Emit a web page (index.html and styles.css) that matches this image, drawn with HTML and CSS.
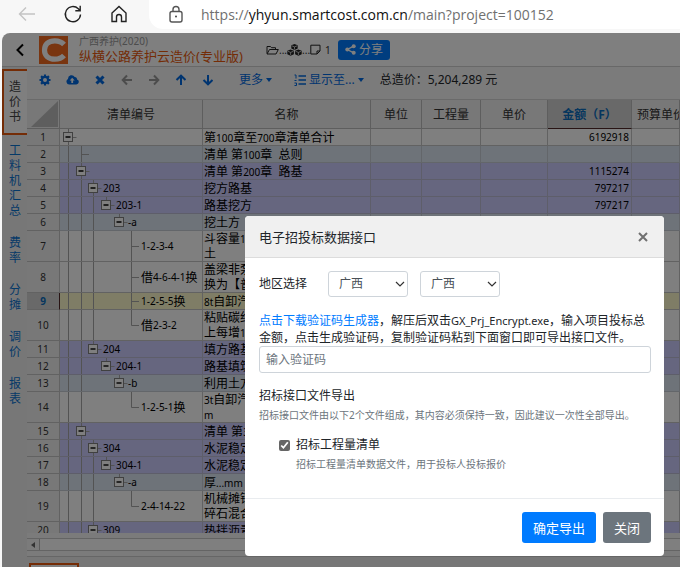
FILE: index.html
```html
<!DOCTYPE html>
<html lang="zh-CN">
<head>
<meta charset="utf-8">
<title>纵横公路养护云造价(专业版)</title>
<link rel="stylesheet" href="styles.css">
</head>
<body>
<svg class="defs" aria-hidden="true">
  <defs>
    <path id="v1" class="guide" d="M8.5 0V31"/>
    <path id="v2" class="guide" d="M21.5 0V31"/>
    <path id="v3" class="guide" d="M33.5 0V31"/>
    <g id="box"><rect class="box" x="-4.5" y="3.5" width="9" height="9"/><path class="minus" d="M-2.5 8H2.5"/><path class="guide" d="M5 8.5H8.500M0.500 0V3"/></g>
    <path id="mid" class="guide" d="M71.500 0V31M72 15.500H79"/>
    <path id="end" class="guide" d="M71.500 0V15.500H79"/>
  </defs>
</svg>

<header class="browser">
  <button class="nav-btn" aria-label="后退"><svg width="20" height="20" viewBox="0 0 20 20"><path class="faint" d="M18 10H2.500M9 3.500L2.500 10L9 16.500"/></svg></button>
  <button class="nav-btn" aria-label="刷新"><svg width="20" height="20" viewBox="0 0 20 20"><path d="M17.500 10.500A7.600 7.600 0 1 1 15.300 4.800L17 6.500M17.200 1.800V6.700H12.300"/></svg></button>
  <button class="nav-btn" aria-label="主页"><svg width="20" height="20" viewBox="0 0 20 20"><path d="M3 9L10 2.500L17 9V17.500H12.500V13a2.500 2.500 0 0 0-5 0V17.500H3Z"/></svg></button>
  <div class="address">
    <svg width="16" height="20" viewBox="0 0 16 20"><rect x="2" y="6.500" width="12" height="10.500" rx="2"/><path d="M5 6.500V4.500a3 3 0 0 1 6 0V6.500"/><circle class="dot" cx="8" cy="11.500" r="1"/></svg>
    <span class="url">https://<b>yhyun.smartcost.com.cn</b>/main?project=100152</span>
  </div>
</header>

<div class="app">
  <header class="app-head">
    <button class="back" aria-label="返回"><svg width="10" height="14" viewBox="0 0 10 14"><path d="M8 1.500L2.500 7L8 12.500"/></svg></button>
    <svg class="logo" width="29" height="28" viewBox="0 0 29 28"><rect width="29" height="28" fill="#f36a21"/><path d="M25 8.500C22.500 5.700 19.500 4.800 15.800 4.800C9.500 4.800 5.500 8.300 5.500 14S9.500 23.200 15.800 23.200C19.500 23.200 22.500 22.300 25 19.500" fill="none" stroke="#fff" stroke-width="5.200"/></svg>
    <div class="titles"><span class="project">广西养护(2020)</span><h1>纵横公路养护云造价(专业版)</h1></div>
    <div class="crumbs">
      <svg width="13" height="10" viewBox="0 0 13 10"><path class="line" d="M1 8.500V1.500H4.500L5.500 2.700H9.500V4.500M1 9L3.500 4.500H12.300L10 9Z"/></svg><span>...</span>
      <svg width="15" height="12" viewBox="0 0 15 12"><path d="M7.500 0L10.700 1.300V4.600L7.500 6L4.300 4.600V1.300ZM3.600 5.400L6.900 6.800V10.200L3.600 11.700L.3 10.200V6.800ZM11.400 5.400L14.700 6.800V10.200L11.400 11.700L8.100 10.200V6.800Z"/><path class="cut" d="M4.800 1.800L7.500 2.900L10.200 1.800M7.500 2.900V5.500M.8 7.300L3.600 8.400L6.400 7.300M3.600 8.400V11M8.600 7.300L11.400 8.400L14.200 7.300M11.400 8.400V11"/></svg><span>...</span>
      <svg width="11" height="11" viewBox="0 0 11 11"><path class="line" d="M.8 1.200H10V7L7 10H.8ZM7 10V7H10"/></svg><span class="count">1</span>
    </div>
    <button class="share"><svg width="11" height="11" viewBox="0 0 11 11"><circle cx="2.300" cy="5.500" r="2"/><circle cx="8.700" cy="2.200" r="2"/><circle cx="8.700" cy="8.800" r="2"/><path d="M8.700 2.200L2.300 5.500L8.700 8.800" fill="none" stroke="#fff" stroke-width="1.300"/></svg>分享</button>
  </header>

  <div class="main">
    <nav class="side">
      <a class="active" href="#a">造价书</a>
      <a href="#b">工料机汇总</a>
      <a href="#c">费率</a>
      <a href="#d">分摊</a>
      <a href="#e">调价</a>
      <a href="#f">报表</a>
    </nav>
    <div class="work">
      <div class="tools">
        <div class="icons">
          <button aria-label="设置"><svg width="12" height="12" viewBox="0 0 12 12"><circle cx="6" cy="6" r="3.100" fill="none" stroke="currentColor" stroke-width="2.200"/><path d="M6 .5V2.500M6 9.500V11.500M.5 6H2.500M9.500 6H11.500M2.100 2.100L3.500 3.500M8.500 8.500L9.900 9.900M9.900 2.100L8.500 3.500M3.500 8.500L2.100 9.900" fill="none" stroke="currentColor" stroke-width="2.200"/></svg></button>
          <button aria-label="上传"><svg width="13" height="12" viewBox="0 0 13 12"><path fill-rule="evenodd" d="M3.200 10.500A3 3 0 0 1 2 4.900A3.600 3.600 0 0 1 8.700 3A2.200 2.200 0 0 1 11 5.600A2.500 2.500 0 0 1 10.300 10.500ZM6.200 3.800L3.700 6.500H5.300V9H7.100V6.500H8.700Z"/></svg></button>
          <button aria-label="删除"><svg width="12" height="12" viewBox="0 0 12 12"><path class="thick" d="M2.500 2.500L9.500 9.500M9.500 2.500L2.500 9.500"/></svg></button>
          <button disabled aria-label="升级"><svg width="12" height="12" viewBox="0 0 12 12"><path class="mid" d="M11 6H2M6 1.500L1.700 6L6 10.500"/></svg></button>
          <button disabled aria-label="降级"><svg width="12" height="12" viewBox="0 0 12 12"><path class="mid" d="M1 6H10M6 1.500L10.300 6L6 10.500"/></svg></button>
          <button aria-label="上移"><svg width="12" height="12" viewBox="0 0 12 12"><path class="mid" d="M6 11V2M1.500 6L6 1.700L10.500 6"/></svg></button>
          <button aria-label="下移"><svg width="12" height="12" viewBox="0 0 12 12"><path class="mid" d="M6 1V10M1.500 6L6 10.300L10.500 6"/></svg></button>
        </div>
        <button class="drop">更多<i class="caret"></i></button>
        <button class="drop"><svg width="12" height="12" viewBox="0 0 12 12"><path d="M4.500 2H12M4.500 6H12M4.500 10H12" fill="none" stroke="currentColor" stroke-width="1.600"/><path d="M.5 1H2V4.500M.5 6.500H2.500M.5 9H2.500V11.500H.5" fill="none" stroke="currentColor"/></svg>显示至...<i class="caret"></i></button>
        <span class="total">总造价：5,204,289 元</span>
      </div>

      <div class="sheet">
        <table>
          <colgroup><col class="c-no"><col class="c-code"><col class="c-name"><col class="c-unit"><col class="c-qty"><col class="c-price"><col class="c-sum"><col></colgroup>
          <thead>
            <tr><th class="corner"><svg width="27" height="26" viewBox="0 0 27 26"><path d="M27 0V26H0Z"/></svg></th><th>清单编号</th><th>名称</th><th>单位</th><th>工程量</th><th>单价</th><th class="picked">金额（F）</th><th class="cut-off">预算单价</th></tr>
          </thead>
          <tbody>
            <tr><th>1</th><td><div class="code"><svg width="43"><use href="#box" x="8"/><path class="guide" d="M8.500 13V17"/></svg></div></td><td>第<s>100</s>章至<s>700</s>章清单合计</td><td></td><td></td><td></td><td class="num">6192918</td><td></td></tr>
            <tr class="sky"><th>2</th><td><div class="code"><svg width="43"><use href="#v1"/><use href="#v2"/><path class="guide" d="M22 8.500H29"/></svg></div></td><td>清单 第<s>100</s>章&nbsp; 总则</td><td></td><td></td><td></td><td></td><td></td></tr>
            <tr class="lilac"><th>3</th><td><div class="code"><svg width="43"><use href="#v1"/><use href="#v2"/><use href="#box" x="21"/></svg></div></td><td>清单 第<s>200</s>章&nbsp; 路基</td><td></td><td></td><td></td><td class="num">1115274</td><td></td></tr>
            <tr class="lilac"><th>4</th><td><div class="code"><svg width="43"><use href="#v1"/><use href="#v2"/><use href="#v3"/><use href="#box" x="33"/></svg><s>203</s></div></td><td>挖方路基</td><td></td><td></td><td></td><td class="num">797217</td><td></td></tr>
            <tr class="lilac"><th>5</th><td><div class="code"><svg width="56"><use href="#v1"/><use href="#v2"/><use href="#v3"/><use href="#box" x="46"/></svg><s>203-1</s></div></td><td>路基挖方</td><td></td><td></td><td></td><td class="num">797217</td><td></td></tr>
            <tr class="sky"><th>6</th><td><div class="code"><svg width="68"><use href="#v1"/><use href="#v2"/><use href="#v3"/><use href="#box" x="59"/></svg><s>-a</s></div></td><td>挖土方</td><td></td><td></td><td></td><td></td><td></td></tr>
            <tr class="tall"><th>7</th><td><div class="code"><svg width="81"><use href="#v1"/><use href="#v2"/><use href="#v3"/><use href="#mid"/></svg><s>1-2-3-4</s></div></td><td>斗容量<s>1</s><br>土</td><td></td><td></td><td></td><td></td><td></td></tr>
            <tr class="tall"><th>8</th><td><div class="code"><svg width="81"><use href="#v1"/><use href="#v2"/><use href="#v3"/><use href="#mid"/></svg>借<s>4-6-4-1</s>换</div></td><td>盖梁非泵<br>换为【普</td><td></td><td></td><td></td><td></td><td></td></tr>
            <tr class="current"><th>9</th><td><div class="code"><svg width="81"><use href="#v1"/><use href="#v2"/><use href="#v3"/><use href="#mid" y="-7"/></svg><s>1-2-5-5</s>换</div></td><td><s>8t</s>自卸汽</td><td></td><td></td><td></td><td></td><td></td></tr>
            <tr class="tall"><th>10</th><td><div class="code"><svg width="81"><use href="#v1"/><use href="#v2"/><use href="#v3"/><use href="#end"/></svg>借<s>2-3-2</s></div></td><td>粘贴碳纤<br>上每增<s>1</s></td><td></td><td></td><td></td><td></td><td></td></tr>
            <tr class="lilac"><th>11</th><td><div class="code"><svg width="43"><use href="#v1"/><use href="#v2"/><use href="#box" x="33"/></svg><s>204</s></div></td><td>填方路基</td><td></td><td></td><td></td><td></td><td></td></tr>
            <tr class="lilac"><th>12</th><td><div class="code"><svg width="56"><use href="#v1"/><use href="#v2"/><use href="#box" x="46"/></svg><s>204-1</s></div></td><td>路基填筑</td><td></td><td></td><td></td><td></td><td></td></tr>
            <tr class="sky"><th>13</th><td><div class="code"><svg width="68"><use href="#v1"/><use href="#v2"/><use href="#box" x="59"/></svg><s>-b</s></div></td><td>利用土方</td><td></td><td></td><td></td><td></td><td></td></tr>
            <tr class="tall"><th>14</th><td><div class="code"><svg width="81"><use href="#v1"/><use href="#v2"/><use href="#end"/></svg><s>1-2-5-1</s>换</div></td><td><s>3t</s>自卸汽<br><s>m</s></td><td></td><td></td><td></td><td></td><td></td></tr>
            <tr class="lilac"><th>15</th><td><div class="code"><svg width="43"><use href="#v1"/><use href="#v2"/><use href="#box" x="21"/></svg></div></td><td>清单 第<s>3</s></td><td></td><td></td><td></td><td></td><td></td></tr>
            <tr class="lilac"><th>16</th><td><div class="code"><svg width="43"><use href="#v1"/><use href="#v2"/><use href="#v3"/><use href="#box" x="33"/></svg><s>304</s></div></td><td>水泥稳定</td><td></td><td></td><td></td><td></td><td></td></tr>
            <tr class="lilac"><th>17</th><td><div class="code"><svg width="56"><use href="#v1"/><use href="#v2"/><use href="#v3"/><use href="#box" x="46"/></svg><s>304-1</s></div></td><td>水泥稳定</td><td></td><td></td><td></td><td></td><td></td></tr>
            <tr class="sky"><th>18</th><td><div class="code"><svg width="68"><use href="#v1"/><use href="#v2"/><use href="#v3"/><use href="#box" x="59"/></svg><s>-a</s></div></td><td>厚<s>...mm</s></td><td></td><td></td><td></td><td></td><td></td></tr>
            <tr class="tall"><th>19</th><td><div class="code"><svg width="81"><use href="#v1"/><use href="#v2"/><use href="#v3"/><use href="#end"/></svg><s>2-4-14-22</s></div></td><td>机械摊铺<br>碎石混合</td><td></td><td></td><td></td><td></td><td></td></tr>
            <tr class="lilac"><th>20</th><td><div class="code"><svg width="43"><use href="#v1"/><use href="#v2"/><use href="#v3"/><use href="#box" x="33"/></svg><s>309</s></div></td><td>热拌沥青</td><td></td><td></td><td></td><td></td><td></td></tr>
          </tbody>
        </table>
      </div>
      <div class="scroll"><span class="arrow"><i></i></span><span class="track"></span></div>
      <div class="tabs"><span class="tab"></span></div>
    </div>
  </div>

  <div class="backdrop">
    <section class="modal" role="dialog" aria-labelledby="dlg">
      <header><h2 id="dlg">电子招投标数据接口</h2><button class="close" aria-label="关闭窗口"><svg width="10" height="10" viewBox="0 0 10 10"><path d="M1 1L9 9M9 1L1 9"/></svg></button></header>
      <div class="body">
        <div class="region">
          <label for="r1">地区选择</label>
          <select id="r1"><option>广西</option></select>
          <select aria-label="地区选择"><option>广西</option></select>
        </div>
        <p class="lead"><a href="#gen">点击下载验证码生成器</a>，解压后双击<span class="latin">GX_Prj_Encrypt.exe</span>，输入项目投标总<br>金额，点击生成验证码，复制验证码粘到下面窗口即可导出接口文件。</p>
        <input class="code-input" type="text" placeholder="输入验证码" aria-label="输入验证码">
        <h3>招标接口文件导出</h3>
        <p class="hint">招标接口文件由以下2个文件组成，其内容必须保持一致，因此建议一次性全部导出。</p>
        <div class="choice">
          <input type="checkbox" id="ck" checked>
          <div><label for="ck">招标工程量清单</label><p class="hint">招标工程量清单数据文件，用于投标人投标报价</p></div>
        </div>
      </div>
      <footer><button class="btn primary">确定导出</button><button class="btn">关闭</button></footer>
    </section>
  </div>
</div>
</body>
</html>
```
FILE: styles.css
```css
* { box-sizing: border-box; }
body {
  margin: 0;
  height: 100vh;
  overflow: hidden;
  display: flex;
  flex-direction: column;
  background: #f7f7f7;
  color: #212529;
  font: 12px/16px "Noto Sans", "Noto Sans CJK SC", sans-serif;
}
button { border: 0; padding: 0; background: none; font: inherit; color: inherit; }
h1, h2, h3, p { margin: 0; font-weight: 400; }
a { text-decoration: none; color: #007bff; }
s { text-decoration: none; font-size: 10px; line-height: 10px; }
svg { display: block; flex: none; }
.defs { position: absolute; width: 0; height: 0; }

/* browser bar */
.browser { flex: none; height: 33px; display: flex; padding-left: 17px; gap: 26px; align-items: flex-start; }
.nav-btn { padding-top: 4px; }
.browser svg { fill: none; stroke: #222; stroke-width: 1.4; }
.browser .faint { stroke: #c4c4c4; }
.browser .dot { fill: #444; stroke: none; }
.address { flex: 1; height: 29px; display: flex; align-items: center; gap: 17px; padding-left: 19px; margin-left: -6px; background: #fff; border-radius: 0 0 0 14px; }
.address svg { stroke: #555; }
.url { font: 14px/20px "Open Sans", sans-serif; color: #707070; white-space: nowrap; }
.url b { font-weight: 400; color: #111; }

/* application frame */
.app { position: relative; flex: 1; min-height: 0; margin-left: 2px; display: flex; flex-direction: column; background: #fff; border-radius: 8px 0 0 0; overflow: hidden; }
.app-head { flex: none; height: 34px; display: flex; align-items: center; border-bottom: 1px solid #d0d0d0; }
.app-head > * { flex: none; }
.back { width: 37px; padding-left: 13px; }
.back path { fill: none; stroke: #000; stroke-width: 2; }
.titles { width: 198px; padding-left: 11px; white-space: nowrap; }
.project { display: block; font-size: 10px; line-height: 13px; color: #999; }
h1 { font-size: 13px; line-height: 17px; color: #e8590c; }
.crumbs { width: 72px; display: flex; align-items: center; color: #333; }
.crumbs svg { fill: #222; }
.crumbs .line { fill: none; stroke: #222; }
.crumbs .cut { fill: none; stroke: #fff; stroke-width: .7; }
.crumbs span { font-size: 10px; }
.crumbs .count { padding-left: 4px; }
.share { height: 20px; width: 52px; display: flex; align-items: center; justify-content: center; gap: 3px; background: #007bff; color: #fff; border-radius: 3px; }
.share svg { fill: #fff; }

.main { flex: 1; min-height: 0; display: flex; }
.side { flex: none; width: 25px; padding-top: 2px; display: flex; flex-direction: column; background: #efefef; }
.side a { padding: 8px 6px 9px 7px; font-size: 12px; line-height: 15px; color: #0b74d1; word-break: break-all; text-align: center; }
.side .active { padding-left: 5px; border: 2px solid #e8590c; border-right: 0; background: #fff; color: #444; }

.work { flex: 1; min-width: 0; display: flex; flex-direction: column; background: #f6f6f6; }
.tools { flex: none; height: 32px; display: flex; padding: 5px 0 0 12px; color: #0069e0; white-space: nowrap; }
.tools > * { height: 16px; display: flex; align-items: center; }
.tools svg { fill: currentColor; }
.icons { width: 200px; gap: 15px; }
.icons button:disabled { color: #999; }
.thick { fill: none; stroke: currentColor; stroke-width: 3; }
.mid { fill: none; stroke: currentColor; stroke-width: 2; }
.drop { gap: 3px; margin-right: 16px; }
.drop + .drop { margin-left: 6px; }
.caret { border: 3px solid transparent; border-top: 4px solid currentColor; border-bottom: 0; }
.total { color: #212529; }

/* bill grid */
.sheet { flex: none; height: 434px; overflow: hidden; border-top: 1px solid #d4d4d4; background: #fff; }
table { width: 100%; table-layout: fixed; border-collapse: separate; border-spacing: 0; color: #000; }
.c-no { width: 33px; } .c-code { width: 143px; } .c-name { width: 168px; } .c-unit { width: 51px; }
.c-qty { width: 59px; } .c-price { width: 67px; } .c-sum { width: 84px; }
th, td { padding: 0; height: 17px; border: 0 solid #c4c4c4; border-width: 0 1px 1px 0; white-space: nowrap; overflow: hidden; line-height: 15px; }
th { font-weight: 400; background: #f0f0f0; color: #333; text-align: center; }
tbody th { font-size: 10px; }
td { padding-left: 1px; }
thead th { height: 29px; border-color: #bdbdbd; }
.corner svg { margin-left: 4px; fill: #bdbdbd; }
.picked { background: #d3d3d3; color: #0b6cbc; font-weight: 700; border-bottom: 1px solid #502828; }
.cut-off { text-align: left; padding-left: 5px; }
.num { text-align: right; padding-right: 2px; font-size: 10px; }
.code { display: flex; align-items: center; height: 16px; margin-left: -1px; }
.code svg { height: 100%; }
.tall th, .tall td { height: 31px; }
.tall .code { height: 30px; }
.sky td { background: #dce6f2; border-color: #c6cdd4; }
.lilac td { background: #ccccff; border-color: #bcbcd4; }
.current td { background: #fffacd; }
.current th { background: #d3d3d3; color: #0b6cbc; font-weight: 700; border-right: 1px solid #502828; }
.guide { fill: none; stroke: #a6a6a6; }
.box { fill: #fff; stroke: #808080; }
.minus { stroke: #000; stroke-width: 1.4; }

.scroll { flex: none; display: flex; height: 13px; margin-top: 5px; border: 1px solid #c8c8c8; border-width: 1px 0; }
.arrow { width: 13px; display: flex; align-items: center; justify-content: center; border-right: 1px solid #bbb; }
.arrow i { border: 3px solid transparent; border-right: 4px solid #666; border-left: 0; }
.track { flex: 1; background: #fff; }
.tabs { flex: 1; margin-top: 5px; padding: 6px 2px 0; border-top: 1px solid #ccc; background: #efefef; }
.tab { display: block; width: 50px; height: 20px; border: 2px solid #e8590c; background: #fff; }

/* dialog */
.backdrop { position: absolute; inset: 0; padding: 183px 16px 0 0; background: rgba(0, 0, 0, .5); }
.modal { width: 419px; margin-left: auto; background: #fff; border-radius: 4px; overflow: hidden; }
.modal > header { height: 42px; display: flex; align-items: center; justify-content: space-between; padding: 0 16px 0 14px; background: #f0f0f0; border-bottom: 1px solid #dcdcdc; }
h2 { font-size: 13px; }
.close path { fill: none; stroke: #707070; stroke-width: 2; }
.body { padding: 13px 13px 0 14px; height: 240px; }
.region { display: flex; align-items: center; }
.region label { width: 69px; }
select { appearance: none; width: 80px; height: 26px; margin-right: 12px; padding: 0 10px; border: 1px solid #ced4da; border-radius: 3px; color: #495057; font: inherit;
  background: #fff url("data:image/svg+xml,%3Csvg xmlns='http://www.w3.org/2000/svg' width='10' height='6'%3E%3Cpath d='M1 1L5 5L9 1' fill='none' stroke='%23333' stroke-width='1.2'/%3E%3C/svg%3E") no-repeat right 2px center; }
.lead { margin-top: 15px; line-height: 17px; white-space: nowrap; }
.latin { font-size: 11px; }
.code-input { display: block; width: 100%; height: 27px; margin: 0 0 14px; padding: 0 6px; border: 1px solid #ced4da; border-radius: 3px; font: inherit; }
.code-input::placeholder { color: #6c757d; opacity: 1; }
h3 { font-size: 12px; line-height: 18px; }
.hint { font-size: 10px; line-height: 20px; color: #6c757d; white-space: nowrap; }
.choice { display: flex; margin: 11px 0 0 20px; gap: 6px; }
.choice input { width: 11px; height: 11px; margin: 4px 0 0; accent-color: #666; }
.choice label { display: block; line-height: 18px; }
.modal > footer { display: flex; justify-content: flex-end; gap: 7px; padding: 13px 13px 13px; border-top: 1px solid #e9ecef; }
.btn { height: 31px; padding: 0 11px; border-radius: 3px; background: #6c757d; color: #fff; font-size: 13px; }
.primary { background: #007bff; }
```
